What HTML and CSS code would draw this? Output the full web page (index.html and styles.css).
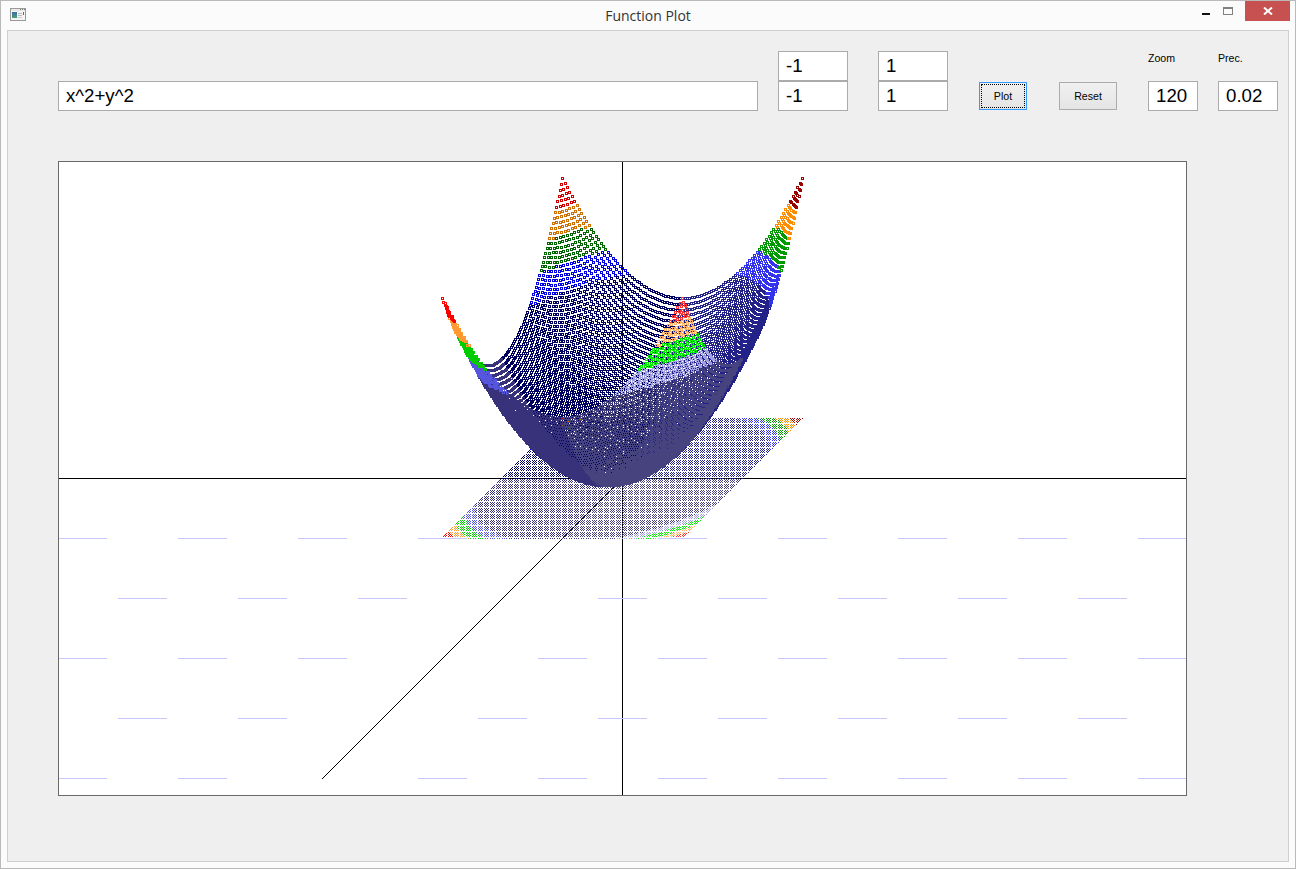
FILE: index.html
```html
<!DOCTYPE html>
<html lang="en">
<head>
<meta charset="utf-8">
<title>Function Plot</title>
<link rel="stylesheet" href="styles.css">
</head>
<body>
<div class="window">
  <header class="titlebar">
    <svg class="app-icon" width="16" height="13" viewBox="0 0 16 13" aria-hidden="true">
      <defs><linearGradient id="ig" x1="0" y1="0" x2="0" y2="1"><stop offset="0" stop-color="#3a6ea5"/><stop offset="1" stop-color="#4aa07a"/></linearGradient></defs>
      <rect x="0.5" y="0.5" width="15" height="12" fill="#f4f4f4" stroke="#9a9a9a"/>
      <rect x="1" y="1" width="14" height="2" fill="#e8e8e8"/>
      <rect x="10" y="1" width="1" height="1" fill="#777"/><rect x="12" y="1" width="1" height="1" fill="#777"/><rect x="14" y="1" width="1" height="1" fill="#777"/>
      <rect x="2" y="4" width="5" height="6" fill="url(#ig)"/>
      <rect x="8" y="5" width="4" height="1" fill="#bbb"/><rect x="8" y="7" width="4" height="1" fill="#bbb"/><rect x="8" y="9" width="4" height="1" fill="#ccc"/>
      <rect x="13" y="4" width="1" height="3" fill="#3a7a7a"/>
    </svg>
    <h1 class="title">Function Plot</h1>
    <div class="controls">
      <span class="ctl ctl-min"><i></i></span>
      <span class="ctl ctl-max"><i></i></span>
      <span class="ctl ctl-close">
        <svg width="10" height="8" viewBox="0 0 10 8" aria-hidden="true"><path d="M1 0.5 L9 7.5 M9 0.5 L1 7.5" stroke="#fff" stroke-width="2" fill="none"/></svg>
      </span>
    </div>
  </header>
  <main class="client">
    <div class="toolbar">
      <input class="field fn" value="x^2+y^2" aria-label="Function">
      <div class="range range-a">
        <input class="field small" value="-1" aria-label="X min">
        <input class="field small" value="-1" aria-label="Y min">
      </div>
      <div class="range range-b">
        <input class="field small" value="1" aria-label="X max">
        <input class="field small" value="1" aria-label="Y max">
      </div>
      <button class="btn btn-plot"><span>Plot</span></button>
      <button class="btn btn-reset">Reset</button>
      <label class="param param-zoom"><span class="lbl">Zoom</span><input class="field zoom" value="120"></label>
      <label class="param param-prec"><span class="lbl">Prec.</span><input class="field prec" value="0.02"></label>
    </div>
    <div class="plot"><canvas id="plot" width="1127" height="633"></canvas></div>
  </main>
</div>
<script src="plot.js"></script>
</body>
</html>
```
FILE: styles.css
```css
* { box-sizing: border-box; }
html, body { margin: 0; padding: 0; background: #fafafa; }
body { width: 1296px; height: 869px; overflow: hidden; font-family: "Liberation Sans", Arial, sans-serif; }
.window { width: 1296px; height: 869px; border: 1px solid #b9b9b9; background: #fbfbfb; padding: 0 6px 6px; display: flex; flex-direction: column; }
.titlebar { height: 29px; flex: none; display: grid; grid-template-columns: 1fr auto 1fr; align-items: start; }
.app-icon { margin: 7px 0 0 3px; display: block; }
.title { margin: 7px 0 0; font: 400 14px/16px "Open Sans", "Noto Sans", sans-serif; color: #333; }
.controls { justify-self: end; display: flex; align-items: flex-start; margin-right: -1px; }
.ctl { display: flex; justify-content: center; }
.ctl-min { width: 26px; height: 20px; }
.ctl-min i { display: block; width: 8px; height: 2px; background: #111; margin-top: 12px; }
.ctl-max { width: 18px; height: 20px; margin-right: 8px; }
.ctl-max i { display: block; width: 10px; height: 8px; border: 1px solid #808080; border-top-width: 2px; margin-top: 6px; }
.ctl-close { width: 45px; height: 20px; background: #c75050; align-items: center; }
.client { flex: 1; border: 1px solid #cfcfcf; background: #efefef; padding: 20px 0 0 50px; }
.toolbar { display: flex; align-items: flex-end; height: 60px; }
.field { display: block; height: 30px; border: 1px solid #ababab; background: #fff; color: #000; font: 18.67px/28px "Liberation Sans", Arial, sans-serif; padding: 0 0 0 7px; margin: 0; outline: 0; border-radius: 0; }
.fn { width: 700px; }
.small { width: 70px; }
.range { display: flex; flex-direction: column; }
.range-a { margin-left: 20px; }
.range-b { margin-left: 30px; }
.btn { height: 28px; margin-bottom: 1px; border: 1px solid #acacac; background: linear-gradient(#f0f0f0, #e5e5e5); font: 10.6px "Liberation Sans", Arial, sans-serif; color: #000; padding: 0; }
.btn-plot { width: 48px; margin-left: 31px; border-color: #3399ff; padding: 1px; }
.btn-plot span { display: flex; align-items: center; justify-content: center; height: 100%; border: 1px dotted #000; }
.btn-reset { width: 58px; margin-left: 32px; }
.param { display: flex; flex-direction: column; }
.param-zoom { margin-left: 31px; }
.param-prec { margin-left: 20px; }
.lbl { font-size: 10.6px; line-height: 12px; margin-bottom: 17px; color: #000; }
.zoom { width: 50px; }
.prec { width: 60px; }
.plot { margin-top: 50px; width: 1129px; height: 635px; border: 1px solid #696969; background: #fff; }
.plot canvas { display: block; }
```
FILE: plot.js
```js
var ctx = document.getElementById('plot').getContext('2d');
var OX = 59, OY = 162;
function px(c, x, y, w, h) { ctx.fillStyle = c; ctx.fillRect(x - OX, y - OY, w || 1, h || 1); }

// axes
px('#000', 59, 478, 1127, 1);
px('#000', 622, 162, 1, 633);
for (var i = 0; i <= 300; i++) px('#000', 622 - i, 478 + i);

// colour by quadrant of the (x, y) domain and by height band
var palettes = {
  bl: ['#d00000', '#d07000', '#006400', '#0000e0', '#000060'],
  br: ['#990000', '#ff8c00', '#009900', '#3333ee', '#222288'],
  fl: ['#ff0000', '#ff9933', '#00cc00', '#5555dd', '#37327a'],
  fr: ['#ff3333', '#ffb060', '#00ee00', '#a0a0e0', '#47437f']
};
function colour(x, y, z) {
  var p = palettes[(y >= 0 ? 'b' : 'f') + (x >= 0 ? 'r' : 'l')];
  return z > 1.8 ? p[0] : z > 1.6 ? p[1] : z > 1.4 ? p[2] : z > 1.2 ? p[3] : p[4];
}

var N = 100, STEP = 0.02, ZOOM = 120;

// shadow on the floor, one pixel per sample
for (var a = 0; a <= N; a++) {
  for (var b = 0; b <= N; b++) {
    var x = -1 + a * STEP, y = -1 + b * STEP, z = x * x + y * y;
    px(colour(x, y, z),
       Math.floor(622 + ZOOM * x + ZOOM / 2 * y + 1e-6),
       Math.floor(478 - ZOOM / 2 * y + 1e-6));
  }
}

// dashed floor grid
var rows = [
  [538, [58, 178, 298, 418, 658, 778, 898, 1018, 1138]],
  [598, [118, 238, 358, 598, 718, 838, 958, 1078]],
  [658, [58, 178, 298, 538, 658, 778, 898, 1018, 1138]],
  [718, [118, 238, 478, 598, 718, 838, 958, 1078]],
  [778, [58, 178, 418, 538, 658, 778, 898, 1018, 1138]]
];
rows.forEach(function (r) {
  r[1].forEach(function (s) {
    var from = Math.max(s, 59), to = Math.min(s + 49, 1186);
    px('#c8c8ff', from, r[0], to - from, 1);
  });
});

// surface: far side first, hollow 3x3 markers
for (var b2 = N; b2 >= 0; b2--) {
  for (var a2 = 0; a2 <= N; a2++) {
    var x2 = -1 + a2 * STEP, y2 = -1 + b2 * STEP, z2 = x2 * x2 + y2 * y2;
    var c = colour(x2, y2, z2);
    var X = Math.floor(621.6 + ZOOM * x2 + ZOOM / 2 * y2);
    var Y = Math.floor(477.5 - ZOOM / 2 * y2 - ZOOM * z2);
    px(c, X, Y, 3, 1);
    px(c, X, Y + 2, 3, 1);
    px(c, X, Y + 1, 1, 1);
    px(c, X + 2, Y + 1, 1, 1);
  }
}
```
